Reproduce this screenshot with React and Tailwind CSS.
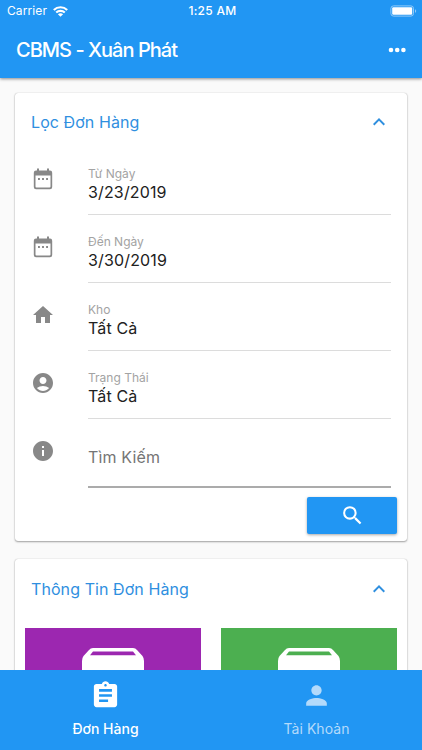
import React from 'react';
import {
  MdHome,
  MdAccountCircle,
  MdInfo,
  MdSearch,
  MdKeyboardArrowUp,
  MdAssignment,
  MdPerson,
} from 'react-icons/md';

function CalendarIcon({ className }) {
  return (
    <svg className={className} viewBox="0 0 24 24" fill="currentColor">
      <path
        fillRule="evenodd"
        d="M6 1.600H8V3.500H16V1.600H18V3.500H19Q21.200 3.500 21.200 5.700V20Q21.200 22.200 19 22.200H5Q2.800 22.200 2.800 20V5.700Q2.800 3.500 5 3.500H6ZM4.500 8.500V19.500Q4.500 20.500 5.500 20.500H18.500Q19.500 20.500 19.500 19.500V8.500Z"
      />
      <path d="M7 11.100H8.900V13H7ZM11.050 11.100H12.950V13H11.050ZM15.100 11.100H17V13H15.100Z" />
    </svg>
  );
}

const fields = [
  { icon: CalendarIcon, label: 'Từ Ngày', value: '3/23/2019' },
  { icon: CalendarIcon, label: 'Đến Ngày', value: '3/30/2019' },
  { icon: MdHome, label: 'Kho', value: 'Tất Cả' },
  { icon: MdAccountCircle, label: 'Trạng Thái', value: 'Tất Cả' },
];

function StatusBar() {
  return (
    <div className="grid h-[22px] grid-cols-3 items-center pl-[7px] pr-[5px] text-[12px] leading-[22px]">
      <div className="flex items-center gap-[6px]">
        <span className="tracking-[0.1px]">Carrier</span>
        <svg className="h-[11px] w-[15px]" viewBox="0 0 15 11" fill="none" stroke="currentColor" strokeWidth="2.1">
          <path d="M0.8 4C4.6 0.300 10.400 0.300 14.200 4" />
          <path d="M3.2 6.600C5.600 4.300 9.400 4.300 11.800 6.600" />
          <path d="M7.500 10.800L4.900 8.300C6.300 6.900 8.700 6.900 10.100 8.300Z" fill="currentColor" stroke="none" />
        </svg>
      </div>
      <span className="pl-[1px] text-center font-medium tracking-[0.3px]">1:25 AM</span>
      <svg className="h-[12px] w-[27px] justify-self-end" viewBox="0 0 27 12">
        <rect x="0.9" y="0.9" width="22.6" height="10.2" rx="2.6" fill="none" stroke="#90caf9" strokeWidth="1" />
        <rect x="2.2" y="2.2" width="20" height="7.6" rx="1.2" fill="#fff" />
        <path d="M25 4.2C26.6 4.7 26.6 7.3 25 7.8Z" fill="#90caf9" />
      </svg>
    </div>
  );
}

function CardHeader({ title }) {
  return (
    <div className="flex h-[57px] shrink-0 items-center justify-between pl-[16px] pr-[16px]">
      <h2 className="text-[16px] tracking-[0.08px] text-[#2f8fdf]">{title}</h2>
      <MdKeyboardArrowUp className="size-[24px] text-[#2f8fdf]" />
    </div>
  );
}

function Field({ icon: Icon, label, value }) {
  return (
    <div className="flex h-[68.2px] pl-[16px] pr-[16px]">
      <Icon className="mt-[20px] size-[24px] shrink-0 text-[#888]" />
      <div className="ml-[33px] flex-1 border-b border-[#dcdcdc] pt-[19px]">
        <div className="text-[12px] leading-[16px] text-[#a3a3a3]">{label}</div>
        <div className="text-[16px] leading-[21px] tracking-[0.15px] text-[#212121]">{value}</div>
      </div>
    </div>
  );
}

function BoxIcon() {
  return (
    <svg className="h-[60px] w-[62px]" viewBox="0 0 62 60">
      <path
        fill="#fff"
        fillRule="evenodd"
        d="M11 0H51Q53.500 0 55 2L60.500 8Q62 10 62 13V60H0V13Q0 10 1.500 8L7 2Q8.500 0 11 0ZM11 3.500L8 7.300H54L51 3.500Z"
      />
    </svg>
  );
}

function App() {
  return (
    <div className="flex h-[750px] w-[422px] flex-col overflow-hidden bg-[#fafafa] font-['Inter',sans-serif]">
      <header className="z-10 h-[78px] shrink-0 bg-[#2196f3] text-white shadow-[0_1px_3px_rgba(0,0,0,0.45)]">
        <StatusBar />
        <div className="flex h-[55px] items-center justify-between pl-[16px] pr-[16px]">
          <h1 className="text-[20px] font-medium tracking-[-0.98px]">CBMS - Xuân Phát</h1>
          <svg className="h-[6px] w-[18px]" viewBox="0 0 18 6" fill="currentColor">
            <circle cx="3" cy="3" r="2.300" />
            <circle cx="9.200" cy="3" r="2.300" />
            <circle cx="15.400" cy="3" r="2.300" />
          </svg>
        </div>
      </header>

      <main className="flex min-h-0 flex-1 flex-col gap-[18px] overflow-hidden px-[15px] pt-[15px]">
        <section className="h-[448px] shrink-0 rounded-[3px] bg-white shadow-[0_1px_2px_rgba(0,0,0,0.35),0_0_1px_rgba(0,0,0,0.3)]">
          <CardHeader title="Lọc Đơn Hàng" />
          <div className="-mt-[3.5px]">
            {fields.map((field) => (
              <Field key={field.label} {...field} />
            ))}
          </div>
          <div className="flex h-[68.500px] pl-[16px] pr-[16px]">
            <MdInfo className="mt-[20px] size-[24px] shrink-0 text-[#888]" />
            <div className="ml-[33px] flex-1 border-b-2 border-[#ababab] pt-[26px] text-[16px] leading-[24px] tracking-[0.15px] text-[#757575]">
              Tìm Kiếm
            </div>
          </div>
          <div className="flex justify-end pr-[10px] pt-[9px]">
            <button className="flex h-[37px] w-[90px] items-center justify-center rounded-[2px] bg-[#2196f3] text-white shadow-[0_1px_3px_rgba(0,0,0,0.35)]">
              <MdSearch className="size-[25px]" />
            </button>
          </div>
        </section>

        <section className="shrink-0 rounded-[3px] bg-white shadow-[0_1px_2px_rgba(0,0,0,0.35),0_0_1px_rgba(0,0,0,0.3)]">
          <div className="pt-[1px]">
            <CardHeader title="Thông Tin Đơn Hàng" />
          </div>
          <div className="mt-[11px] flex justify-between px-[10px]">
            <div className="flex h-[176px] w-[176px] justify-center bg-[#9c27b0] pt-[20px]">
              <BoxIcon />
            </div>
            <div className="flex h-[176px] w-[176px] justify-center bg-[#4caf50] pt-[20px]">
              <BoxIcon />
            </div>
          </div>
        </section>
      </main>

      <nav className="z-10 flex h-[80px] shrink-0 bg-[#2196f3] text-[14px]">
        <div className="flex flex-1 flex-col items-center pt-[10px] text-white">
          <MdAssignment className="size-[31px]" />
          <span className="mt-[8px] font-medium leading-[20px]">Đơn Hàng</span>
        </div>
        <div className="flex flex-1 flex-col items-center pt-[10px] text-[#b3dafb]">
          <MdPerson className="size-[31px]" />
          <span className="mt-[8px] leading-[20px] tracking-[0.05px]">Tài Khoản</span>
        </div>
      </nav>
    </div>
  );
}

export default App;
